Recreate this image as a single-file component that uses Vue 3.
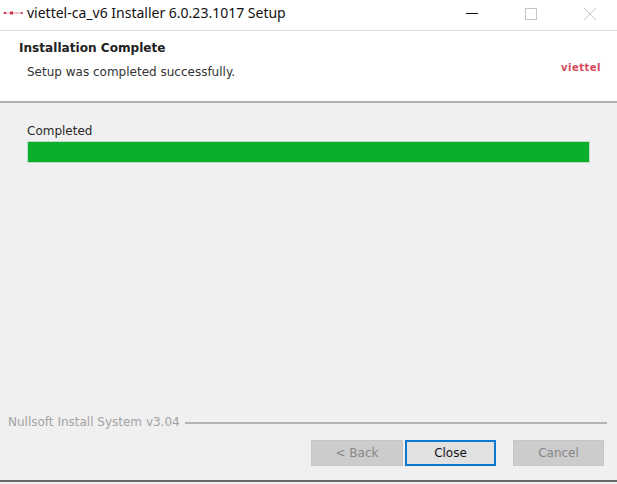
<template>
  <div class="window">
    <div class="titlebar">
      <svg class="app-icon" width="20" height="8" viewBox="0 0 20 8">
        <path d="M0 4h20" stroke="#e08a96" stroke-width="1" />
        <path d="M7 2.5h3v3H7zM18 3h1.500v2H18zM1 3h2v2H1z" fill="#c8324a" />
      </svg>
      <span class="title">viettel-ca_v6 Installer 6.0.23.1017 Setup</span>
      <div class="controls">
        <svg width="14" height="14" viewBox="0 0 14 14" class="ctl">
          <path d="M1 6.500h12" stroke="#111" stroke-width="1" />
        </svg>
        <svg width="14" height="14" viewBox="0 0 14 14" class="ctl">
          <rect x="1.500" y="1.500" width="11" height="11" fill="none" stroke="#c4c4c4" />
        </svg>
        <svg width="14" height="14" viewBox="0 0 14 14" class="ctl">
          <path d="M1 1l12 12M13 1L1 13" stroke="#c8c8c8" stroke-width="1" />
        </svg>
      </div>
    </div>

    <div class="header">
      <div class="header-text">
        <div class="heading">Installation Complete</div>
        <div class="subheading">Setup was completed successfully.</div>
      </div>
      <span class="logo">viettel</span>
    </div>

    <div class="body">
      <div class="status">Completed</div>
      <div class="progress">
        <div class="progress-fill" :style="{ width: percent + '%' }"></div>
      </div>
    </div>

    <div class="branding">
      <span class="brand-text">Nullsoft Install System v3.04</span>
      <span class="brand-line"></span>
    </div>

    <div class="buttons">
      <button class="btn btn-back" disabled>&lt; Back</button>
      <button class="btn btn-default">Close</button>
      <button class="btn btn-cancel" disabled>Cancel</button>
    </div>
  </div>
</template>

<script setup>
const percent = 100
</script>

<style>
html,
body {
  margin: 0;
  background: #f0f0f0;
}
</style>

<style scoped>
.window {
  width: 617px;
  height: 484px;
  box-sizing: border-box;
  display: flex;
  flex-direction: column;
  background: #f0f0f0;
  font-family: "DejaVu Sans", "Noto Sans", sans-serif;
  font-size: 12px;
  color: #222;
  overflow: hidden;
}

.titlebar {
  height: 31px;
  box-sizing: border-box;
  flex: none;
  display: flex;
  align-items: center;
  background: #fff;
  border-bottom: 1px solid #dcdcdc;
  padding-left: 3px;
}

.app-icon {
  margin-right: 5px;
  margin-top: -4px;
}

.title {
  font-family: "Noto Sans", sans-serif;
  font-size: 14px;
  color: #111;
  white-space: nowrap;
  margin-top: -5px;
  margin-left: -1px;
}

.controls {
  margin-left: auto;
  display: flex;
  align-items: center;
  gap: 45px;
  padding-right: 20px;
  margin-top: -3px;
}

.header {
  height: 72px;
  box-sizing: border-box;
  flex: none;
  display: flex;
  align-items: flex-start;
  justify-content: space-between;
  background: #fff;
  border-bottom: 2px solid #b0b0b0;
  padding: 8px 16px 0 19px;
}

.heading {
  font-weight: 700;
  font-size: 12.1px;
  line-height: 18px;
  color: #222;
}

.subheading {
  margin-top: 7px;
  padding-left: 8px;
  line-height: 17px;
  color: #333;
}

.logo {
  margin-top: 23px;
  font-size: 10px;
  font-weight: 700;
  letter-spacing: 0.5px;
  color: #d8475c;
}

.body {
  flex: 1;
  padding: 20px 27px 0;
}

.status {
  line-height: 17px;
  color: #2a2a2a;
}

.progress {
  margin-top: 1px;
  height: 22px;
  box-sizing: border-box;
  border: 1px solid #c4dcc9;
  background: #e6e6e6;
}

.progress-fill {
  height: 100%;
  background: #09ae2b;
}

.branding {
  flex: none;
  display: flex;
  align-items: center;
  gap: 5px;
  padding: 0 10px 0 8px;
  color: #a3a3a3;
}

.brand-line {
  flex: 1;
  height: 2px;
  background: #b4b4b4;
  margin-top: 1px;
}

.buttons {
  flex: none;
  display: flex;
  justify-content: flex-end;
  padding: 11px 13px 14px 0;
  border-bottom: 2px solid #6a6a6a;
  margin-bottom: 2px;
}

.btn {
  width: 91px;
  height: 26px;
  box-sizing: border-box;
  border: 1px solid #c6c6c6;
  background: #cccccc;
  color: #868686;
  font-family: inherit;
  font-size: 12px;
  padding: 0;
}

.btn-back {
  width: 92px;
}

.btn-default {
  margin-left: 2px;
  border: 2px solid #0a78d0;
  background: #e1e1e1;
  color: #111;
}

.btn-cancel {
  margin-left: 17px;
}
</style>
